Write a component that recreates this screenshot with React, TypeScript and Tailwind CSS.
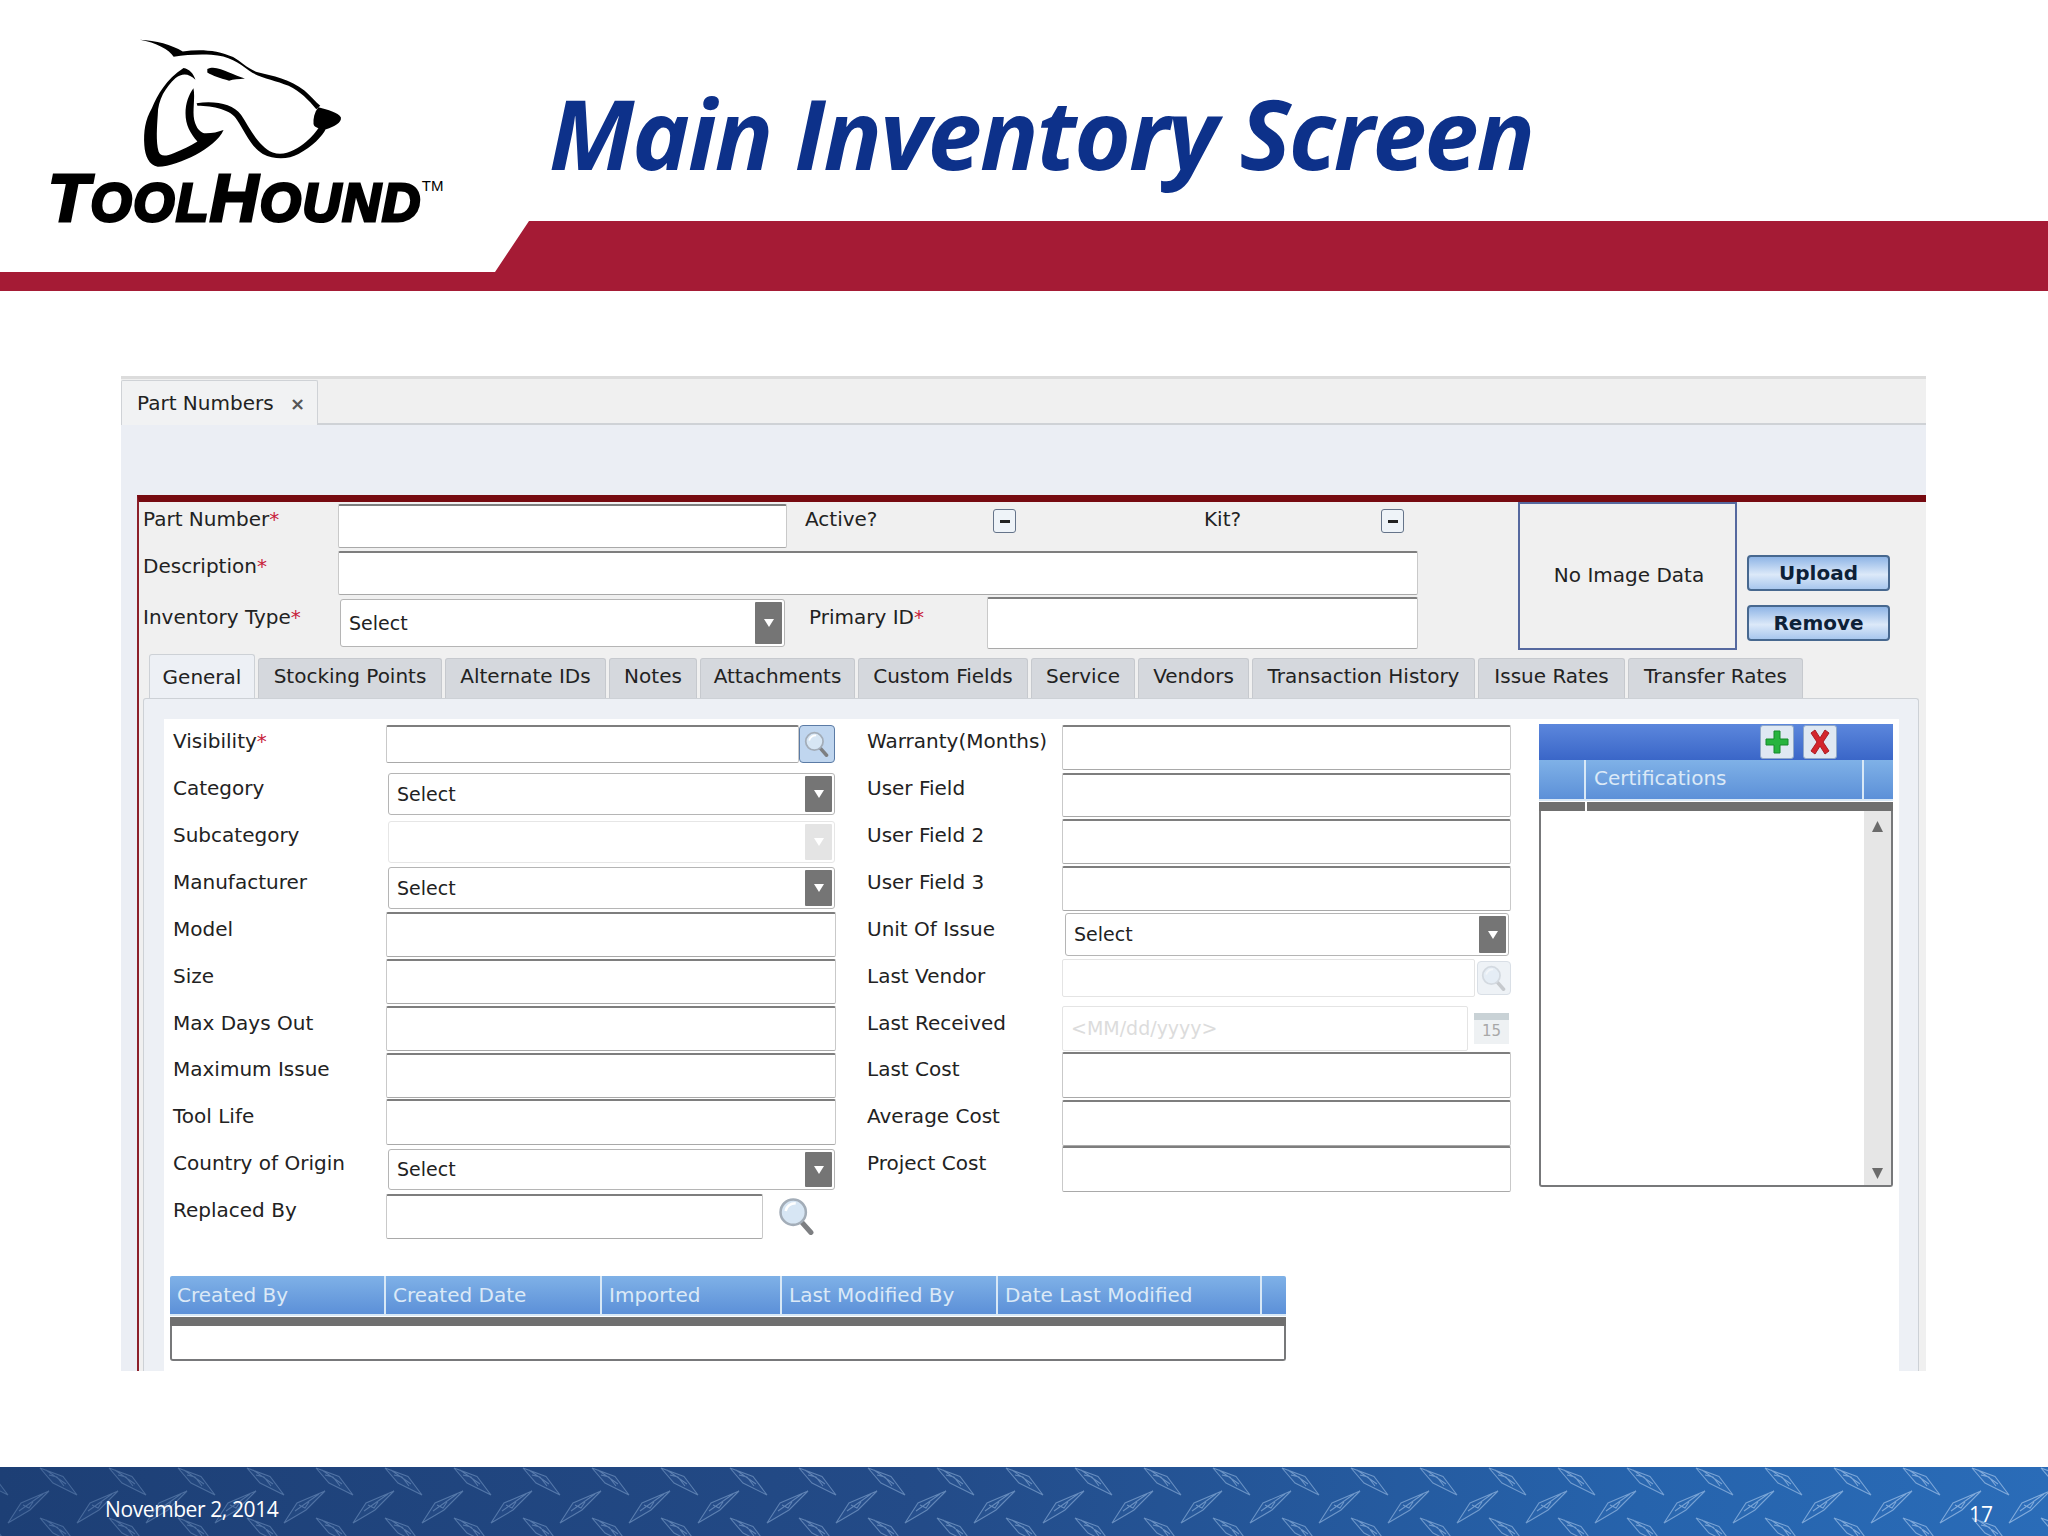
import type { ReactNode } from 'react';

const tabs = [
  { name: 'General', w: 'w-[106px]', active: true },
  { name: 'Stocking Points', w: 'w-[184px]' },
  { name: 'Alternate IDs', w: 'w-[161px]' },
  { name: 'Notes', w: 'w-[88px]' },
  { name: 'Attachments', w: 'w-[155px]' },
  { name: 'Custom Fields', w: 'w-[170px]' },
  { name: 'Service', w: 'w-[104px]' },
  { name: 'Vendors', w: 'w-[111px]' },
  { name: 'Transaction History', w: 'w-[223px]' },
  { name: 'Issue Rates', w: 'w-[147px]' },
  { name: 'Transfer Rates', w: 'w-[175px]' },
];

const auditCols = [
  { name: 'Created By', w: 'w-[216px]' },
  { name: 'Created Date', w: 'w-[216px]' },
  { name: 'Imported', w: 'w-[180px]' },
  { name: 'Last Modified By', w: 'w-[216px]' },
  { name: 'Date Last Modified', w: 'w-[264px]' },
  { name: '', w: 'flex-1' },
];

function Star() {
  return <span className="text-[#c8213c]">*</span>;
}

function TextInput({ className = '', disabled = false }: { className?: string; disabled?: boolean }) {
  return (
    <div
      className={`rounded-[2px] bg-white ${
        disabled
          ? 'border border-[#e4e4e4]'
          : 'border border-[#c9c9c9] border-b-[#a9a9a9] border-t-2 border-t-[#7e7e7e]'
      } ${className}`}
    />
  );
}

function SelectBox({ className = '', disabled = false }: { className?: string; disabled?: boolean }) {
  return (
    <div className={`flex items-stretch rounded-[3px] border bg-white p-[2px] ${disabled ? 'border-[#e6e6e6]' : 'border-[#b5b5b5]'} ${className}`}>
      <span className="flex flex-1 items-center pl-[6px] text-[19px]">{disabled ? '' : 'Select'}</span>
      <span className={`flex w-[27px] items-center justify-center rounded-[1px] ${disabled ? 'bg-[#e4e4e4]' : 'bg-[#757575]'}`}>
        <svg width="12" height="10" viewBox="0 0 12 10"><path d="M1 1h10L6 9z" fill="#fff" /></svg>
      </span>
    </div>
  );
}

function Magnifier({ size = 30, faded = false }: { size?: number; faded?: boolean }) {
  return (
    <svg width={size} height={size} viewBox="0 0 30 30" opacity={faded ? 0.35 : 1}>
      <path d="M18 19l8 9" stroke="#7d7f82" strokeWidth="4" strokeLinecap="round" />
      <circle cx="12" cy="12" r="10" fill="#d7e6f4" stroke="#a3adb8" strokeWidth="2" />
      <path d="M6 11c1-4 4-6 8-6" stroke="#fff" strokeWidth="2" fill="none" />
    </svg>
  );
}

function Row({ label, required, h, top, children }: { label: string; required?: boolean; h: string; top: string; children: ReactNode }) {
  return (
    <div className={`flex items-start ${h}`}>
      <span className={`w-[222px] shrink-0 pl-[9px] leading-[24px] ${top}`}>
        {label}
        {required && <Star />}
      </span>
      {children}
    </div>
  );
}

function MidRow({ label, h, top, children }: { label: string; h: string; top: string; children: ReactNode }) {
  return (
    <div className={`flex items-start ${h}`}>
      <span className={`w-[195px] shrink-0 leading-[24px] ${top}`}>{label}</span>
      {children}
    </div>
  );
}

function CheckBox() {
  return (
    <div className="mt-[5px] flex h-[24px] w-[23px] shrink-0 items-center justify-center rounded-[3px] border border-[#65748a] bg-[#eef3f8]">
      <span className="h-[3px] w-[10px] bg-[#222]" />
    </div>
  );
}

function ActionButton({ label }: { label: string }) {
  return (
    <div className="flex h-[36px] w-[143px] items-center justify-center rounded-[4px] border-2 border-[#47688f] bg-[linear-gradient(180deg,#8fb5e6_0%,#dce9f9_55%,#a8c7ee_100%)] text-[20px] font-bold text-[#0d2138]">
      {label}
    </div>
  );
}

function DogHead() {
  return (
    <svg width="214" height="137" viewBox="340 100 540 410" preserveAspectRatio="none" className="ml-[134px] block">
      <path
        d="M355 120C395 122 435 135 463 155C505 148 550 150 590 172C610 185 625 205 650 217C690 228 735 240 770 272C785 288 798 305 810 318L800 328C780 300 760 275 730 258C695 240 655 235 630 212C605 190 580 168 535 165C505 163 470 165 440 171C430 150 395 128 355 120Z"
        fill="#000"
      />
      <path d="M805 322C830 330 855 338 862 352C865 368 845 380 825 388C810 385 795 385 793 372C792 355 795 338 805 322Z" fill="#000" />
      <path
        d="M825 385C815 410 790 440 755 462C730 478 695 480 665 462C635 440 620 395 600 360C585 330 540 318 500 318L498 310C545 302 590 312 610 345C630 380 650 435 690 458C720 470 750 450 775 425C790 410 800 395 808 380Z"
        fill="#000"
      />
      <path
        d="M465 205C480 208 490 222 495 240C480 222 462 218 445 235C420 262 400 300 400 345C398 380 395 425 402 455C406 470 420 470 440 460C462 450 482 438 500 425C482 400 470 375 470 340C470 310 478 285 490 265C495 295 487 330 492 360C497 385 508 400 522 400C538 400 552 396 566 390C555 420 525 445 495 465C465 482 430 500 400 500C378 495 368 470 366 435C364 395 368 360 385 325C400 285 420 240 465 205Z"
        fill="#000"
      />
      <path d="M525 208C540 198 560 208 580 218C592 224 608 232 620 236C605 238 590 238 580 243C560 235 538 228 525 218Z" fill="#000" />
    </svg>
  );
}

function Logo() {
  return (
    <div className="w-[549px] shrink-0 pt-[33px]">
      <DogHead />
      <div className="ml-[48px] mt-[2px] flex h-[52px] items-baseline font-['Liberation_Sans',sans-serif] font-bold italic leading-[52px] tracking-[1.5px] text-black [-webkit-text-stroke:3px_#000]">
        <span className="text-[67px]">T</span>
        <span className="text-[53px]">OOL</span>
        <span className="text-[67px]">H</span>
        <span className="text-[53px]">OUND</span>
        <span className="self-start pt-[4px] text-[15px] font-normal not-italic leading-[20px] tracking-normal [-webkit-text-stroke:0]">TM</span>
      </div>
    </div>
  );
}

const kiteColumns = Array.from({ length: 31 }, (_, i) => i * 69 - 29);

function FooterPlate() {
  return (
    <svg className="absolute inset-0" width="2048" height="69" fill="#6d9cd6" fillOpacity="0.06" stroke="#a9c8ec" strokeWidth="1.1">
      {kiteColumns.map((x) => (
        <g key={x} strokeOpacity={0.28 + (0.4 * x) / 2048}>
          {[1, 51].map((y) => (
            <path key={y} transform={`translate(${x} ${y})`} d="M0 0L23 8.500L37 27L13 15ZM6 2L26 16M9 7L17 9L24 18" />
          ))}
          <path transform={`translate(${x + 5} 24)`} d="M4 0L-24 12L-37 32L-15 19ZM-2 3L-26 20M-22 14L-16 17L-12 11" />
        </g>
      ))}
    </svg>
  );
}

export default function App() {
  return (
    <div className="flex h-[1536px] w-[2048px] flex-col overflow-hidden bg-white font-['DejaVu_Sans',sans-serif] text-[20px] text-[#222]">
      <header className="flex h-[221px] shrink-0 items-start">
        <Logo />
        <h1 className="pt-[82px] font-['Open_Sans',sans-serif] text-[97px] font-bold italic leading-[100px] tracking-[-2px] text-[#0d318a]">
          Main Inventory Screen
        </h1>
      </header>
      <div className="h-[70px] shrink-0 bg-[#a51b35] [clip-path:polygon(0_51px,495px_51px,529px_0,100%_0,100%_100%,0_100%)]" />

      <main className="ml-[121px] mt-[85px] flex h-[995px] w-[1805px] shrink-0 flex-col overflow-hidden bg-[#ebeef4]">
        {/* top tab bar */}
        <div className="flex h-[49px] shrink-0 items-end border-b-2 border-[#cfd2d6] border-t-[3px] border-t-[#dcdcdc] bg-[#f0f0f0]">
          <div className="-mb-[2px] flex h-[45px] w-[197px] items-center justify-between rounded-t-[2px] border border-b-0 border-[#cfd2d6] bg-[#f1f2f3] pl-[15px] pr-[12px]">
            <span>Part Numbers</span>
            <span className="text-[18px] font-bold text-[#555]">×</span>
          </div>
        </div>
        <div className="h-[70px] shrink-0" />

        {/* form */}
        <section className="ml-[16px] flex min-h-0 flex-1 flex-col border-l-2 border-t-[7px] border-l-[#8c1f2a] border-t-[#760a10] bg-[#f0f0f0]">
          <div className="flex h-[152px] shrink-0">
            <div className="w-[1279px] shrink-0 pt-[2px]">
              <div className="flex h-[47px] items-start">
                <span className="w-[199px] shrink-0 pl-[4px] leading-[30px]">Part Number<Star /></span>
                <TextInput className="h-[44px] w-[449px]" />
                <span className="ml-[18px] w-[188px] leading-[30px]">Active?</span>
                <CheckBox />
                <span className="ml-[188px] w-[177px] leading-[30px]">Kit?</span>
                <CheckBox />
              </div>
              <div className="flex h-[46px] items-start">
                <span className="w-[199px] shrink-0 pl-[4px] leading-[30px]">Description<Star /></span>
                <TextInput className="h-[44px] w-[1080px]" />
              </div>
              <div className="flex items-start">
                <span className="w-[201px] shrink-0 pl-[4px] leading-[40px]">Inventory Type<Star /></span>
                <SelectBox className="mt-[2px] h-[48px] w-[445px]" />
                <span className="ml-[24px] w-[178px] leading-[40px]">Primary ID<Star /></span>
                <TextInput className="h-[52px] w-[431px]" />
              </div>
            </div>
            <div className="ml-[100px] flex h-[148px] w-[219px] shrink-0 items-center justify-center border-2 border-[#56699f] pb-[2px] pl-[3px]">
              No Image Data
            </div>
            <div className="ml-[10px] flex flex-col gap-[14px] pt-[53px]">
              <ActionButton label="Upload" />
              <ActionButton label="Remove" />
            </div>
          </div>

          {/* inner tabs */}
          <div className="ml-[10px] flex h-[44px] shrink-0 items-end gap-[3px]">
            {tabs.map((t) => (
              <div
                key={t.name}
                className={`flex shrink-0 items-center justify-center rounded-t-[3px] border border-b-0 ${t.w} ${
                  t.active ? 'h-[44px] border-[#cdd1d6] bg-[#edf0f5]' : 'h-[40px] border-[#c6c9ce] bg-[#d5d8dd] pb-[5px]'
                }`}
              >
                {t.name}
              </div>
            ))}
          </div>

          <div className="ml-[4px] flex min-h-0 w-[1776px] flex-1 flex-col rounded-t-[3px] border border-b-0 border-[#cdd1d6] bg-[#edf0f5] pl-[20px] pr-[19px] pt-[20px]">
            <div className="min-h-0 flex-1 bg-white">
              <div className="flex h-[557px] pt-[6px]">
                {/* left column */}
                <div className="w-[703px] shrink-0">
                  <Row label="Visibility" required h="h-[48px]" top="mt-[4px]">
                    <TextInput className="h-[38px] w-[413px]" />
                    <div className="flex h-[38px] w-[36px] items-center justify-center rounded-[4px] border border-[#5b7ba5] bg-[#c0d6ef]">
                      <Magnifier size={26} />
                    </div>
                  </Row>
                  <Row label="Category" h="h-[48px]" top="mt-[3px]">
                    <SelectBox className="ml-[2px] h-[42px] w-[447px]" />
                  </Row>
                  <Row label="Subcategory" h="h-[46px]" top="mt-[2px]">
                    <SelectBox disabled className="ml-[2px] h-[42px] w-[447px]" />
                  </Row>
                  <Row label="Manufacturer" h="h-[45px]" top="mt-[3px]">
                    <SelectBox className="ml-[2px] h-[42px] w-[447px]" />
                  </Row>
                  <Row label="Model" h="h-[47px]" top="mt-[5px]">
                    <TextInput className="h-[45px] w-[450px]" />
                  </Row>
                  <Row label="Size" h="h-[47px]" top="mt-[5px]">
                    <TextInput className="h-[45px] w-[450px]" />
                  </Row>
                  <Row label="Max Days Out" h="h-[47px]" top="mt-[5px]">
                    <TextInput className="h-[45px] w-[450px]" />
                  </Row>
                  <Row label="Maximum Issue" h="h-[46px]" top="mt-[4px]">
                    <TextInput className="h-[45px] w-[450px]" />
                  </Row>
                  <Row label="Tool Life" h="h-[50px]" top="mt-[5px]">
                    <TextInput className="h-[46px] w-[450px]" />
                  </Row>
                  <Row label="Country of Origin" h="h-[45px]" top="mt-[2px]">
                    <SelectBox className="ml-[2px] h-[41px] w-[447px]" />
                  </Row>
                  <Row label="Replaced By" h="h-[46px]" top="mt-[4px]">
                    <TextInput className="h-[45px] w-[377px]" />
                    <div className="ml-[15px] mt-[3px]">
                      <Magnifier size={38} />
                    </div>
                  </Row>
                </div>

                {/* middle column */}
                <div className="w-[644px] shrink-0">
                  <MidRow label="Warranty(Months)" h="h-[48px]" top="mt-[4px]">
                    <TextInput className="h-[45px] w-[449px]" />
                  </MidRow>
                  <MidRow label="User Field" h="h-[46px]" top="mt-[3px]">
                    <TextInput className="h-[44px] w-[449px]" />
                  </MidRow>
                  <MidRow label="User Field 2" h="h-[47px]" top="mt-[4px]">
                    <TextInput className="h-[45px] w-[449px]" />
                  </MidRow>
                  <MidRow label="User Field 3" h="h-[47px]" top="mt-[4px]">
                    <TextInput className="h-[45px] w-[449px]" />
                  </MidRow>
                  <MidRow label="Unit Of Issue" h="h-[46px]" top="mt-[4px]">
                    <SelectBox className="ml-[3px] h-[43px] w-[444px]" />
                  </MidRow>
                  <MidRow label="Last Vendor" h="h-[47px]" top="mt-[5px]">
                    <TextInput disabled className="h-[38px] w-[413px]" />
                    <div className="ml-[2px] mt-[2px] flex h-[34px] w-[34px] items-center justify-center rounded-[4px] border border-[#d9dfe6] bg-[#eef2f6]">
                      <Magnifier size={26} faded />
                    </div>
                  </MidRow>
                  <MidRow label="Last Received" h="h-[46px]" top="mt-[5px]">
                    <div className="flex h-[45px] w-[406px] items-center rounded-[2px] border border-[#e4e4e4] bg-white pl-[8px] text-[19px] text-[#dcdcdc]">
                      {'<MM/dd/yyyy>'}
                    </div>
                    <div className="ml-[6px] mt-[7px] h-[31px] w-[35px] bg-[#eef1f3] text-center text-[15px] leading-[22px] text-[#a8a8a8]">
                      <div className="h-[7px] bg-[#c9d2d6]" />
                      15
                    </div>
                  </MidRow>
                  <MidRow label="Last Cost" h="h-[48px]" top="mt-[5px]">
                    <TextInput className="h-[46px] w-[449px]" />
                  </MidRow>
                  <MidRow label="Average Cost" h="h-[46px]" top="mt-[4px]">
                    <TextInput className="h-[46px] w-[449px]" />
                  </MidRow>
                  <MidRow label="Project Cost" h="h-[46px]" top="mt-[5px]">
                    <TextInput className="h-[46px] w-[449px]" />
                  </MidRow>
                </div>

                {/* certifications */}
                <div className="ml-[28px] -mt-[1px] flex h-[463px] w-[354px] shrink-0 flex-col">
                  <div className="flex h-[36px] shrink-0 items-center justify-end gap-[9px] bg-[linear-gradient(180deg,#5c87dc,#3a66c8)] pr-[56px]">
                    <div className="flex h-[34px] w-[34px] items-center justify-center rounded-[3px] border border-[#8fa8c9] bg-[#dfe8f2]">
                      <svg width="24" height="26" viewBox="0 0 24 26"><path d="M9 2h6v8h8v6h-8v8H9v-8H1v-6h8z" fill="#27b43e" stroke="#158a2a" strokeWidth="1" /></svg>
                    </div>
                    <div className="flex h-[34px] w-[34px] items-center justify-center rounded-[3px] border border-[#8fa8c9] bg-[#dfe8f2]">
                      <svg width="24" height="26" viewBox="0 0 24 26"><path d="M3 4l4-3 5 8 5-8 4 3-6 9 6 9-4 3-5-8-5 8-4-3 6-9z" fill="#d4252c" stroke="#a81c22" strokeWidth="1" /></svg>
                    </div>
                  </div>
                  <div className="flex h-[41px] shrink-0 border-b-2 border-[#d8e8f6] bg-[linear-gradient(180deg,#7fb1e7,#5c90d8)] text-[#dbe9f7]">
                    <span className="w-[47px] border-r-2 border-[#d8e8f6]" />
                    <span className="w-[278px] border-r-2 border-[#d8e8f6] pl-[8px] leading-[36px]">Certifications</span>
                  </div>
                  <div className="mt-[1px] flex h-[9px] shrink-0 bg-[#6f6f6f]">
                    <span className="ml-[46px] w-[2px] bg-white" />
                  </div>
                  <div className="flex min-h-0 flex-1 justify-end rounded-b-[3px] border-x-2 border-b-2 border-[#77787a] bg-white">
                    <div className="flex w-[27px] flex-col items-center justify-between bg-[#e6e6e6] pb-[5px] pt-[9px]">
                      <svg width="13" height="13" viewBox="0 0 13 13"><path d="M6.500 1L12 12H1z" fill="#6b6b6b" /></svg>
                      <svg width="13" height="13" viewBox="0 0 13 13"><path d="M1 1h11L6.500 12z" fill="#6b6b6b" /></svg>
                    </div>
                  </div>
                </div>
              </div>

              {/* audit table */}
              <div className="ml-[6px] w-[1116px]">
                <div className="flex h-[40px] rounded-t-[2px] border-b-2 border-[#d8e8f6] bg-[linear-gradient(180deg,#7fb1e7,#5c90d8)] text-[#dbe9f7]">
                  {auditCols.map((c) => (
                    <span key={c.name || 'end'} className={`${c.w} border-r-2 border-[#d8e8f6] pl-[7px] leading-[38px] last:border-r-0`}>
                      {c.name}
                    </span>
                  ))}
                </div>
                <div className="mt-[1px] h-[9px] bg-[#6f6f6f]" />
                <div className="h-[35px] rounded-b-[3px] border-x-2 border-b-2 border-[#77787a] bg-white" />
              </div>
            </div>
          </div>
        </section>
      </main>

      <footer className="relative mt-auto h-[69px] shrink-0 bg-[linear-gradient(90deg,#1d3f75_0%,#234b88_45%,#2663ac_80%,#2a6cb8_100%)] font-['Open_Sans',sans-serif] text-white">
        <FooterPlate />
        <div className="relative flex h-full items-start justify-between pl-[105px] pr-[55px]">
          <span className="pt-[27px] text-[21px] leading-[30px] tracking-[-0.4px]">November 2, 2014</span>
          <span className="pt-[32px] text-[21px] leading-[30px]">17</span>
        </div>
      </footer>
    </div>
  );
}
